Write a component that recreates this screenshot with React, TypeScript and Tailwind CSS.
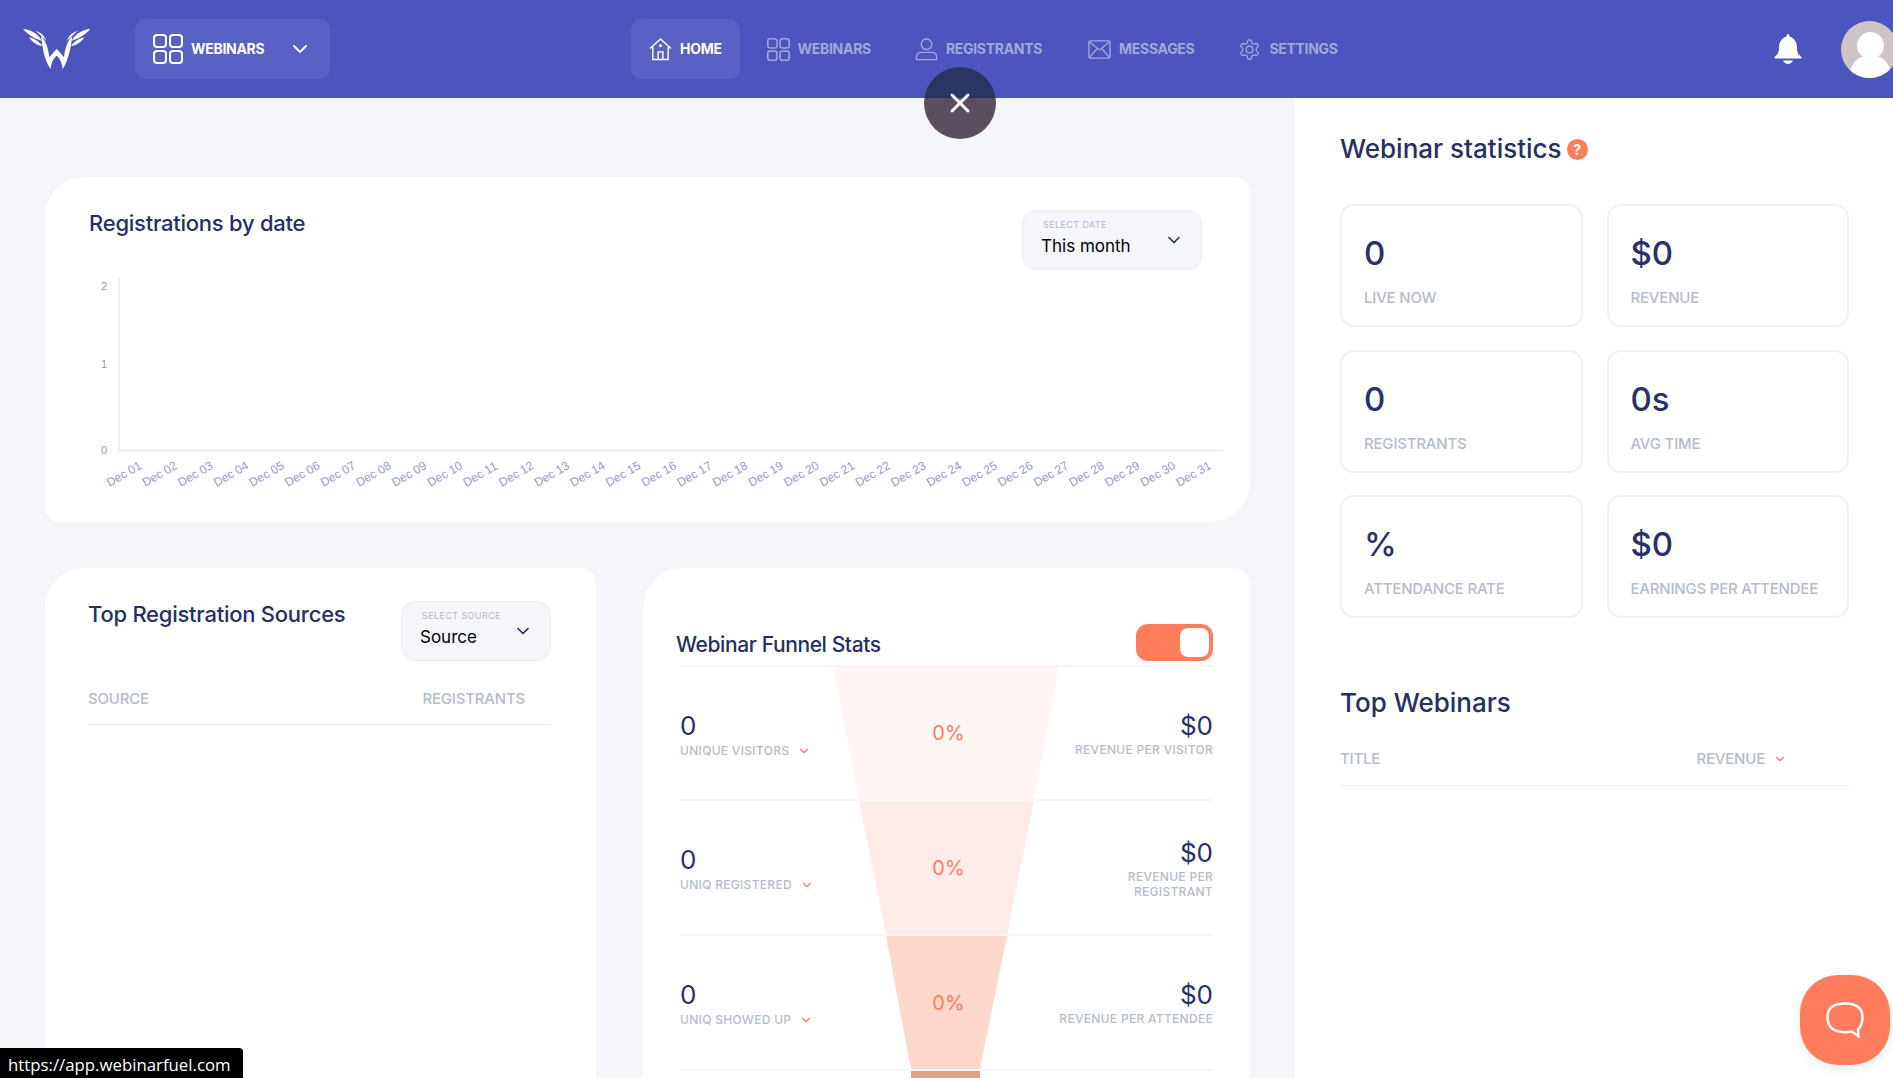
import React from "react";
import { ChevronDown, X } from "lucide-react";

const font = "font-['Inter','Liberation_Sans',sans-serif]";

function GridIcon({ className }: { className: string }) {
  return (
    <svg viewBox="0 0 30 30" fill="none" stroke="currentColor" strokeWidth="2" className={className}>
      <rect x="1" y="1" width="12" height="12" rx="3" />
      <rect x="17" y="1" width="12" height="12" rx="3" />
      <rect x="1" y="17" width="12" height="12" rx="3" />
      <rect x="17" y="17" width="12" height="12" rx="3" />
    </svg>
  );
}

function HomeIcon({ className }: { className: string }) {
  return (
    <svg viewBox="0 0 24 24" fill="none" stroke="currentColor" strokeWidth="1.5" className={className}>
      <path d="M1 11 12 1l11 10" />
      <path d="M4 9v13.500h16V9" />
      <path d="M9.500 22.500v-8h5v8" />
      <circle cx="12" cy="8" r=".8" fill="currentColor" />
    </svg>
  );
}

function PersonIcon({ className }: { className: string }) {
  return (
    <svg viewBox="0 0 24 24" fill="none" stroke="currentColor" strokeWidth="1.4" className={className}>
      <circle cx="12" cy="6.500" r="5.500" />
      <path d="M1.500 22.500v-3c0-3 2.500-4.500 6-4.500h9c3.500 0 6 1.500 6 4.500v3Z" />
    </svg>
  );
}

function MailIcon({ className }: { className: string }) {
  return (
    <svg viewBox="0 0 24 24" fill="none" stroke="currentColor" strokeWidth="1.4" className={className}>
      <rect x="1" y="3" width="22" height="18" rx="1.500" />
      <path d="M1.500 4 12 12.500 22.500 4M1.500 20.500l8-9.500M22.500 20.500l-8-9.500" />
    </svg>
  );
}

function GearIcon({ className }: { className: string }) {
  return (
    <svg viewBox="0 0 24 24" fill="none" stroke="currentColor" strokeWidth="1.300" className={className}>
      <path d="M12.220 2h-.44a2 2 0 0 0-2 2v.18a2 2 0 0 1-1 1.730l-.43.25a2 2 0 0 1-2 0l-.15-.08a2 2 0 0 0-2.730.73l-.22.38a2 2 0 0 0 .73 2.730l.15.1a2 2 0 0 1 1 1.720v.51a2 2 0 0 1-1 1.740l-.15.09a2 2 0 0 0-.73 2.730l.22.38a2 2 0 0 0 2.730.73l.15-.08a2 2 0 0 1 2 0l.43.25a2 2 0 0 1 1 1.730V20a2 2 0 0 0 2 2h.44a2 2 0 0 0 2-2v-.18a2 2 0 0 1 1-1.730l.43-.25a2 2 0 0 1 2 0l.15.08a2 2 0 0 0 2.730-.73l.22-.39a2 2 0 0 0-.73-2.730l-.15-.08a2 2 0 0 1-1-1.740v-.5a2 2 0 0 1 1-1.740l.15-.09a2 2 0 0 0 .73-2.730l-.22-.38a2 2 0 0 0-2.730-.73l-.15.08a2 2 0 0 1-2 0l-.43-.25a2 2 0 0 1-1-1.730V4a2 2 0 0 0-2-2z" />
      <circle cx="12" cy="12" r="3.500" />
    </svg>
  );
}

function Feathers() {
  return (
    <>
      <path d="M24 27C45 28 68 40 80 62 62 58 40 45 24 27Z" />
      <path d="M42 52C55 55 70 62 82 78 68 78 52 68 42 52Z" />
      <path d="M62 33C75 36 88 45 94 62 85 52 72 42 62 33Z" />
    </>
  );
}

function Logo() {
  return (
    <svg viewBox="0 0 270 180" fill="white" className="h-[60px] w-[90px]">
      <Feathers />
      <g transform="translate(250 0) scale(-1 1)">
        <Feathers />
      </g>
      <path d="M78 48C92 60 100 85 103 112L125 86 147 112C150 85 158 60 172 48 168 75 165 110 143 148 142 130 135 115 125 107 115 115 108 130 107 148 85 115 82 75 78 48Z" />
    </svg>
  );
}

function NavItem({ icon, label, active }: { icon: React.ReactNode; label: string; active?: boolean }) {
  return (
    <div className={`flex h-[60px] items-center gap-2 rounded-[10px] ${active ? "bg-[#5861c4] px-[18px] text-white" : "text-[#a0a8dd]"}`}>
      {icon}
      <span className="-mt-[2px] text-[14px] font-bold tracking-[-0.3px]">{label}</span>
    </div>
  );
}

function Header() {
  return (
    <header className="relative flex h-[98px] shrink-0 items-center bg-[#4b55bd]">
      <div className="ml-[15px] mr-[30px] mt-[2px]">
        <Logo />
      </div>
      <div className="flex h-[60px] w-[195px] items-center rounded-[10px] bg-[#5861c4] pl-[18px] text-white">
        <GridIcon className="h-[30px] w-[30px]" />
        <span className="-mt-[2px] ml-[8px] text-[14px] font-bold tracking-[-0.3px]">WEBINARS</span>
        <ChevronDown className="ml-[24px] h-[24px] w-[24px]" strokeWidth={1.8} />
      </div>
      <nav className="ml-[301px] flex items-center">
        <NavItem active icon={<HomeIcon className="h-[23px] w-[23px]" />} label="HOME" />
        <div className="ml-[27px]">
          <NavItem icon={<GridIcon className="h-[23px] w-[23px]" />} label="WEBINARS" />
        </div>
        <div className="ml-[44px]">
          <NavItem icon={<PersonIcon className="h-[23px] w-[23px]" />} label="REGISTRANTS" />
        </div>
        <div className="ml-[46px]">
          <NavItem icon={<MailIcon className="h-[23px] w-[23px]" />} label="MESSAGES" />
        </div>
        <div className="ml-[44px]">
          <NavItem icon={<GearIcon className="h-[23px] w-[23px]" />} label="SETTINGS" />
        </div>
      </nav>
      <div className="ml-auto mr-[-5px] flex items-center gap-[39px]">
        <svg viewBox="0 0 28 30" fill="white" className="h-[30px] w-[28px]">
          <path d="M14 0c1 0 1.500 1 1.500 2.500C21 4 23 9 23 14c0 5 2 7 4.500 9v1.500H.5V23C3 21 5 19 5 14 5 9 7 4 12.500 2.500 12.500 1 13 0 14 0Z" />
          <path d="M9 26.500h10C18 28.800 16 30 14 30s-4-1.200-5-3.500Z" />
        </svg>
        <div className="relative h-[57px] w-[57px] overflow-hidden rounded-full bg-[#cdc4c6]">
          <div className="absolute left-[16px] top-[11px] h-[27px] w-[27px] rounded-full bg-white" />
          <div className="absolute left-[9px] top-[34px] h-[40px] w-[41px] rounded-full bg-white" />
        </div>
      </div>
    </header>
  );
}

function SelectBox({ label, value, className }: { label: string; value: string; className: string }) {
  return (
    <div className={`relative h-[60px] shrink-0 rounded-[14px] border border-[#ebedf3] bg-[#f5f6fa] ${className}`}>
      <div className="absolute left-[20px] top-[8px] text-[9px] leading-[11px] tracking-[0.4px] text-[#b3b8c8]">{label}</div>
      <div className="absolute left-[18px] top-[22px] text-[17px] leading-[26px] text-black">{value}</div>
      <ChevronDown className="absolute right-[17px] top-[19px] h-[20px] w-[20px] text-[#272f63]" strokeWidth={2} />
    </div>
  );
}

function Chart() {
  const days = Array.from({ length: 31 }, (_, i) => `Dec ${String(i + 1).padStart(2, "0")}`);
  return (
    <svg viewBox="0 0 1205 225" className="mt-[15px] block h-[225px] w-[1205px] max-w-none">
      <line x1="74" y1="0" x2="74" y2="173" stroke="#f0f1f8" strokeWidth="2" />
      <line x1="73" y1="173.500" x2="1178" y2="173.500" stroke="#e8e9f4" strokeWidth="1.500" />
      {[["2", 13], ["1", 91], ["0", 177]].map(([t, y]) => (
        <text key={t} x="59" y={y} fontSize="11" fill="#949bcb" fontFamily="Liberation Sans, sans-serif" textAnchor="middle">{t}</text>
      ))}
      {days.map((d, i) => {
        const x = 64.5 + i * 35.65;
        const y = 210;
        return (
          <text key={d} x={x} y={y} fontSize="12" fill="#949bcb" fontFamily="Liberation Sans, sans-serif" transform={`rotate(-30 ${x} ${y})`}>{d}</text>
        );
      })}
    </svg>
  );
}

const statLabel = "text-[15px] font-medium tracking-[-0.2px] text-[#b5bccb]";

function SmallChevron() {
  return <ChevronDown className="h-[14px] w-[14px] text-[#ff7c5c]" strokeWidth={2} />;
}

type Row = {
  label: string;
  right: string[];
  height: string;
  padLeft: string;
  padRight: string;
  fill: string;
  pts: number[];
};

function FunnelRow({ row }: { row: Row }) {
  const { pts } = row;
  return (
    <div className={`relative border-b-2 border-[#f5f6fa] ${row.height}`}>
      <svg viewBox="0 0 533 100" preserveAspectRatio="none" className="absolute inset-0 h-full w-[533px]">
        <polygon fill={row.fill} points={`${pts[0]},0 ${pts[1]},0 ${pts[3]},100 ${pts[2]},100`} />
      </svg>
      <div className="relative flex h-full">
        <div className={`w-[190px] ${row.padLeft}`}>
          <div className="text-[26px] leading-[30px] text-[#2a3168]">0</div>
          <div className="mt-[1px] flex items-center gap-[8px] text-[12px] font-medium tracking-[0.3px] whitespace-nowrap text-[#b5bccb]">
            {row.label}
            <SmallChevron />
          </div>
        </div>
        <div className="flex flex-1 items-center justify-center pl-[4px] text-[20px] text-[#ff7c5c]">0%</div>
        <div className={`w-[190px] text-right ${row.padRight}`}>
          <div className="text-[26px] leading-[30px] text-[#2a3168]">$0</div>
          <div className="mt-[1px] text-[12px] leading-[15px] font-medium tracking-[0.3px] whitespace-nowrap text-[#b5bccb]">
            {row.right.map((line) => (
              <div key={line}>{line}</div>
            ))}
          </div>
        </div>
      </div>
    </div>
  );
}

function StatCard({ value, label }: { value: string; label: string }) {
  return (
    <div className="flex h-[123px] flex-col rounded-[14px] border-2 border-[#f0f1f7] px-[22px] pt-[27px]">
      <div className="text-[33px] leading-[40px] font-medium text-[#2a3168]">{value}</div>
      <div className={`mt-[14px] ${statLabel} whitespace-nowrap`}>{label}</div>
    </div>
  );
}

const rows: Row[] = [
  { label: "UNIQUE VISITORS", right: ["REVENUE PER VISITOR"], height: "h-[134px]", padLeft: "pt-[44px]", padRight: "pt-[44px]", fill: "#fff6f4", pts: [153, 379, 179, 354] },
  { label: "UNIQ REGISTERED", right: ["REVENUE PER", "REGISTRANT"], height: "h-[135px]", padLeft: "pt-[44px]", padRight: "pt-[37px]", fill: "#ffece8", pts: [179, 354, 206, 327] },
  { label: "UNIQ SHOWED UP", right: ["REVENUE PER ATTENDEE"], height: "h-[135px]", padLeft: "pt-[44px]", padRight: "pt-[44px]", fill: "#ffd7cb", pts: [206, 327, 231, 300] },
];

export default function App() {
  return (
    <div className={`relative flex h-[1078px] w-full flex-col overflow-hidden bg-[#f5f6fa] ${font}`}>
      <Header />
      <div className="absolute left-[924px] top-[67px] z-10 flex h-[72px] w-[72px] items-center justify-center rounded-full bg-[linear-gradient(#2c3463_0,#2c3463_31px,#5a4e5f_31px,#5a4e5f_100%)] text-white">
        <X className="h-[32px] w-[32px]" strokeWidth={2.2} />
      </div>
      <div className="flex min-h-0 flex-1">
        <main className="flex w-[1295px] shrink-0 flex-col gap-[46px] pl-[45px] pr-[45px] pt-[79px]">
          <section className="h-[345px] shrink-0 overflow-hidden rounded-[40px_16px_40px_16px] bg-white pt-[33px]">
            <div className="flex items-start justify-between pl-[44px] pr-[48px]">
              <h2 className="text-[22px] leading-[26px] font-medium tracking-[-0.25px] text-[#272f63]">Registrations by date</h2>
              <SelectBox label="SELECT DATE" value="This month" className="w-[180px]" />
            </div>
            <div className="-mt-[8px]">
              <Chart />
            </div>
          </section>
          <div className="flex shrink-0 gap-[47px]">
            <section className="h-[600px] w-[551px] rounded-[40px_16px_0_0] bg-white pl-[43px] pr-[45px] pt-[33px]">
              <div className="flex items-start justify-between">
                <h2 className="text-[22px] leading-[26px] font-medium tracking-[-0.25px] whitespace-nowrap text-[#272f63]">Top Registration Sources</h2>
                <SelectBox label="SELECT SOURCE" value="Source" className="w-[150px]" />
              </div>
              <div className={`mt-[27px] flex justify-between border-b border-[#eceef3] pb-[13px] pr-[26px] ${statLabel}`}>
                <span>SOURCE</span>
                <span>REGISTRANTS</span>
              </div>
            </section>
            <section className="h-[600px] w-[607px] rounded-[40px_16px_0_0] bg-white pl-[37px] pr-[37px] pt-[56px]">
              <div className="flex items-center justify-between">
                <h2 className="mt-[4px] -ml-[4px] text-[21px] leading-[26px] font-medium tracking-[-0.4px] text-[#272f63]">Webinar Funnel Stats</h2>
                <div className="flex h-[37px] w-[77px] items-center justify-end rounded-[12px] bg-[#ff7c5c] pr-[4px]">
                  <div className="h-[29px] w-[29px] rounded-[8px] bg-white" />
                </div>
              </div>
              <div className="mt-[4px] border-t-2 border-[#f5f6fa]">
                {rows.map((r) => (
                  <FunnelRow key={r.label} row={r} />
                ))}
                <div className="ml-[231px] h-[60px] w-[69px] bg-[#e3a085]" />
              </div>
            </section>
          </div>
        </main>
        <aside className="flex-1 bg-white pl-[45px] pr-[44px] pt-[33px]">
          <div className="flex items-center gap-[5px]">
            <h2 className="text-[26px] leading-[36px] font-medium tracking-[0px] text-[#272f63]">Webinar statistics</h2>
            <span className="flex h-[21px] w-[21px] items-center justify-center rounded-full bg-[#ff7c5c] text-[14px] font-bold text-white">?</span>
          </div>
          <div className="mt-[37px] grid grid-cols-2 gap-x-[24px] gap-y-[22.5px]">
            <StatCard value="0" label="LIVE NOW" />
            <StatCard value="$0" label="REVENUE" />
            <StatCard value="0" label="REGISTRANTS" />
            <StatCard value="0s" label="AVG TIME" />
            <StatCard value="%" label="ATTENDANCE RATE" />
            <StatCard value="$0" label="EARNINGS PER ATTENDEE" />
          </div>
          <h2 className="mt-[67px] text-[26px] leading-[36px] font-medium tracking-[0px] text-[#272f63]">Top Webinars</h2>
          <div className={`mt-[27px] flex items-center justify-between border-b border-[#eceef3] pb-[14px] pr-[62px] ${statLabel}`}>
            <span>TITLE</span>
            <span className="flex items-center gap-[8px]">REVENUE <SmallChevron /></span>
          </div>
        </aside>
      </div>
      <div className="absolute bottom-0 left-0 flex h-[30px] w-[243px] items-center rounded-tr-[4px] bg-black pl-[8px] pt-[3px] font-['Open_Sans',sans-serif] text-[16.8px] text-white">https://app.webinarfuel.com</div>
      <div className="absolute left-[1800px] top-[975px] flex h-[90px] w-[90px] items-center justify-center rounded-[38px] bg-[#ff7c5c] shadow-[0_4px_12px_rgba(0,0,0,0.08)]">
        <svg viewBox="0 0 38 36" fill="none" stroke="white" strokeWidth="2.500" className="h-[36px] w-[38px]">
          <path d="M19 1.500c11 0 17.500 4 17.500 14 0 5-1.500 9-4.500 12l.5 7-6.500-5c-2 .5-4.500.7-7 .7C9 30 1.500 26 1.500 15.500S8 1.500 19 1.500Z" />
        </svg>
      </div>
    </div>
  );
}
